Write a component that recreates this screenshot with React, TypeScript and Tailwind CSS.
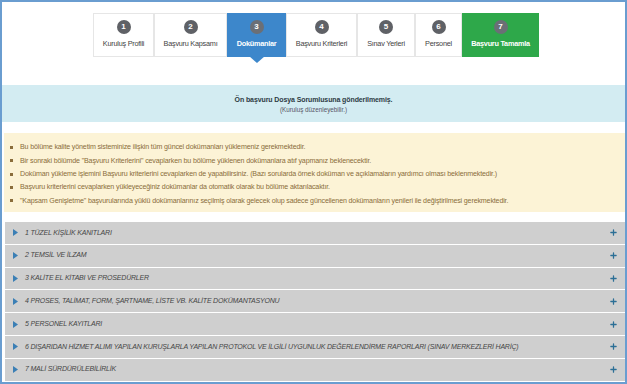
import { Plus } from "lucide-react";

const steps = [
  { n: 1, label: "Kuruluş Profili", w: "w-[61px]", kind: "idle" },
  { n: 2, label: "Başvuru Kapsamı", w: "w-[73px]", kind: "idle" },
  { n: 3, label: "Dokümanlar", w: "w-[59px]", kind: "active" },
  { n: 4, label: "Başvuru Kriterleri", w: "w-[71px]", kind: "idle" },
  { n: 5, label: "Sınav Yerleri", w: "w-[58px]", kind: "idle" },
  { n: 6, label: "Personel", w: "w-[47px]", kind: "idle" },
  { n: 7, label: "Başvuru Tamamla", w: "w-[77px]", kind: "done" },
];

const notes = [
  "Bu bölüme kalite yönetim sisteminize ilişkin tüm güncel dokümanları yüklemeniz gerekmektedir.",
  "Bir sonraki bölümde \"Başvuru Kriterlerini\" cevaplarken bu bölüme yüklenen dokümanlara atıf yapmanız beklenecektir.",
  "Doküman yükleme işlemini Başvuru kriterlerini cevaplarken de yapabilirsiniz. (Bazı sorularda örnek doküman ve açıklamaların yardımcı olması beklenmektedir.)",
  "Başvuru kriterlerini cevaplarken yükleyeceğiniz dokümanlar da otomatik olarak bu bölüme aktarılacaktır.",
  "\"Kapsam Genişletme\" başvurularında yüklü dokümanlarınız seçilmiş olarak gelecek olup sadece güncellenen dokümanların yenileri ile değiştirilmesi gerekmektedir.",
];

const sections = [
  "1 TÜZEL KİŞİLİK KANITLARI",
  "2 TEMSİL VE İLZAM",
  "3 KALİTE EL KİTABI VE PROSEDÜRLER",
  "4 PROSES, TALİMAT, FORM, ŞARTNAME, LİSTE VB. KALİTE DOKÜMANTASYONU",
  "5 PERSONEL KAYITLARI",
  "6 DIŞARIDAN HİZMET ALIMI YAPILAN KURUŞLARLA YAPILAN PROTOKOL VE İLGİLİ UYGUNLUK DEĞERLENDİRME RAPORLARI (SINAV MERKEZLERİ HARİÇ)",
  "7 MALİ SÜRDÜRÜLEBİLİRLİK",
];

function Step({ n, label, w, kind }: { n: number; label: string; w: string; kind: string }) {
  const box =
    kind === "active"
      ? "bg-[#3d87cb] text-white border-[#3d87cb]"
      : kind === "done"
        ? "bg-[#2ea84a] text-white border-[#2ea84a]"
        : "bg-white text-[#444] border-[#e6e6e6]";
  const circle = kind === "idle" ? "bg-[#5f6166]" : "bg-[#6b6f76]";
  return (
    <div className={`relative ${w} h-[44px] border ${box} flex flex-col items-center pt-[6px]`}>
      <div className={`w-[14px] h-[14px] rounded-full ${circle} text-white text-[8px] font-bold flex items-center justify-center`}>
        {n}
      </div>
      <div className={`mt-[5px] text-[7.3px] leading-[10px] whitespace-nowrap tracking-[-0.25px] ${kind === "idle" ? "" : "font-bold"}`}>
        {label}
      </div>
      {kind === "active" && (
        <div className="absolute left-1/2 -translate-x-1/2 top-full w-0 h-0 border-l-[8px] border-r-[8px] border-t-[7px] border-l-transparent border-r-transparent border-t-[#3d87cb]" />
      )}
    </div>
  );
}

export default function App() {
  return (
    <div className="w-[627px] h-[384px] overflow-hidden bg-white border-2 border-[#6a9dd0] font-['Liberation_Sans',Arial,sans-serif]">
      <div className="flex pl-[91px] pt-[11px]">
        {steps.map((s) => (
          <Step key={s.n} {...s} />
        ))}
      </div>

      <div className="mt-[28px] h-[37px] bg-[#d3ecf2] flex flex-col items-center justify-center text-[#2e3b44]">
        <div className="text-[7px] leading-[11px] font-bold tracking-[-0.1px]">Ön başvuru Dosya Sorumlusuna gönderilmemiş.</div>
        <div className="text-[6.3px] leading-[9px] text-[#556]">(Kuruluş düzenleyebilir.)</div>
      </div>

      <div className="mt-[11px] ml-[2px] h-[79px] bg-[#fcf3d6] pt-[8px] pl-[6px] text-[#8a6d3b]">
        {notes.map((t) => (
          <div key={t} className="flex items-center h-[13.3px] text-[7.1px] whitespace-nowrap tracking-[-0.15px]">
            <span className="w-[3px] h-[3px] bg-[#8a6d3b] mr-[7px] shrink-0" />
            {t}
          </div>
        ))}
      </div>

      <div className="mt-[10px] ml-[3px] flex flex-col gap-[1px]">
        {sections.map((s) => (
          <div key={s} className="h-[21.8px] bg-[#cfcfcf] flex items-center pl-[8px] pr-[6px]">
            <svg width="5" height="7" viewBox="0 0 5 7" className="shrink-0">
              <path d="M0 0 L5 3.5 L0 7 Z" fill="#3b7fb5" />
            </svg>
            <span className="ml-[7px] text-[7px] italic text-[#454545] whitespace-nowrap tracking-[-0.2px]">{s}</span>
            <Plus className="ml-auto mr-[1px] text-[#2c6f96]" size={9} strokeWidth={3.4} />
          </div>
        ))}
      </div>
    </div>
  );
}
